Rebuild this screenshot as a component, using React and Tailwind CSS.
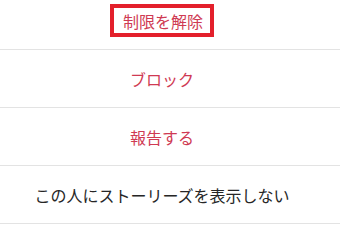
import React from "react";

const font = { fontFamily: '"Noto Sans CJK JP", "Noto Sans", sans-serif' };

export default function App() {
  return (
    <div className="w-[340px] h-[228px] overflow-hidden bg-white" style={font}>
      <div className="mt-[-8px] flex flex-col">
        <div className="h-[58px] border-b border-[#e3e3e3] flex items-center justify-center pr-[16px]">
          <span className="inline-flex items-center h-[33px] border-[4px] border-[#e3202b] pl-[9px] pr-[7px] text-[16px] text-[#cf3a53] leading-none">
            制限を解除
          </span>
        </div>
        <div className="h-[58px] border-b border-[#e3e3e3] flex items-center justify-center pr-[16px] text-[16px] text-[#cf3a53]">
          ブロック
        </div>
        <div className="h-[58px] border-b border-[#e3e3e3] flex items-center justify-center pr-[16px] text-[16px] text-[#cf3a53]">
          報告する
        </div>
        <div className="h-[58px] border-b border-[#e3e3e3] flex items-center justify-center pr-[16px] text-[16px] text-[#262626]">
          この人にストーリーズを表示しない
        </div>
      </div>
    </div>
  );
}
